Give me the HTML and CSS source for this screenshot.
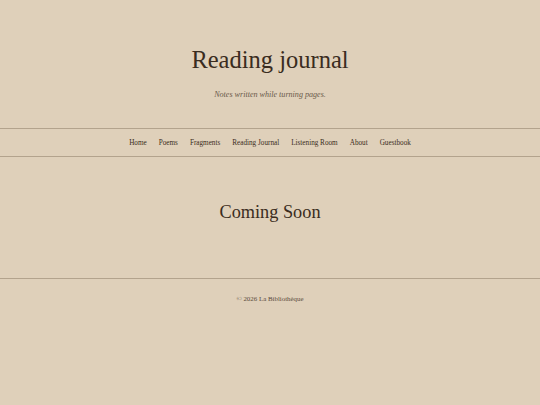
FILE: index.html
```html
<!DOCTYPE html>
<html>
<head>
<meta charset="utf-8">
<link rel="stylesheet" href="styles.css">
</head>
<body>
<header class="masthead">
  <h1 class="title">Reading journal</h1>
  <p class="tagline">Notes written while turning pages.</p>
</header>
<nav class="nav">
  <a href="#">Home</a>
  <a href="#">Poems</a>
  <a href="#">Fragments</a>
  <a href="#">Reading Journal</a>
  <a href="#">Listening Room</a>
  <a href="#">About</a>
  <a href="#">Guestbook</a>
</nav>
<main class="content">
  <h2 class="soon">Coming Soon</h2>
</main>
<footer class="footer">
  <p>© 2026 La Bibliothèque</p>
</footer>
</body>
</html>
```
FILE: styles.css
```css
html, body {
  margin: 0;
  padding: 0;
  background: #dfd0ba;
  color: #3a2c20;
  font-family: "Liberation Serif", "Times New Roman", serif;
}
.masthead {
  text-align: center;
  padding: 45px 0 0;
  height: 83px;
}
.title {
  margin: 0;
  font-weight: normal;
  font-size: 24.5px;
  line-height: 30px;
  color: #3a2c20;
}
.tagline {
  margin: 14px 0 0;
  font-style: italic;
  font-size: 8.1px;
  line-height: 12px;
  color: #6a5a4a;
}
.nav {
  display: flex;
  justify-content: center;
  gap: 12px;
  border-top: 1px solid #b3a38d;
  border-bottom: 1px solid #b3a38d;
  height: 27px;
  align-items: center;
}
.nav a {
  font-size: 7.2px;
  color: #3a2c20;
  text-decoration: none;
}
.content {
  text-align: center;
  height: 121px;
  border-bottom: 1px solid #b3a38d;
}
.soon {
  margin: 0;
  padding-top: 44px;
  font-weight: normal;
  font-size: 18.3px;
  line-height: 22px;
}
.footer {
  text-align: center;
}
.footer p {
  margin: 15px 0 0;
  font-size: 6.9px;
  line-height: 10px;
  color: #5a4a3a;
}
```
